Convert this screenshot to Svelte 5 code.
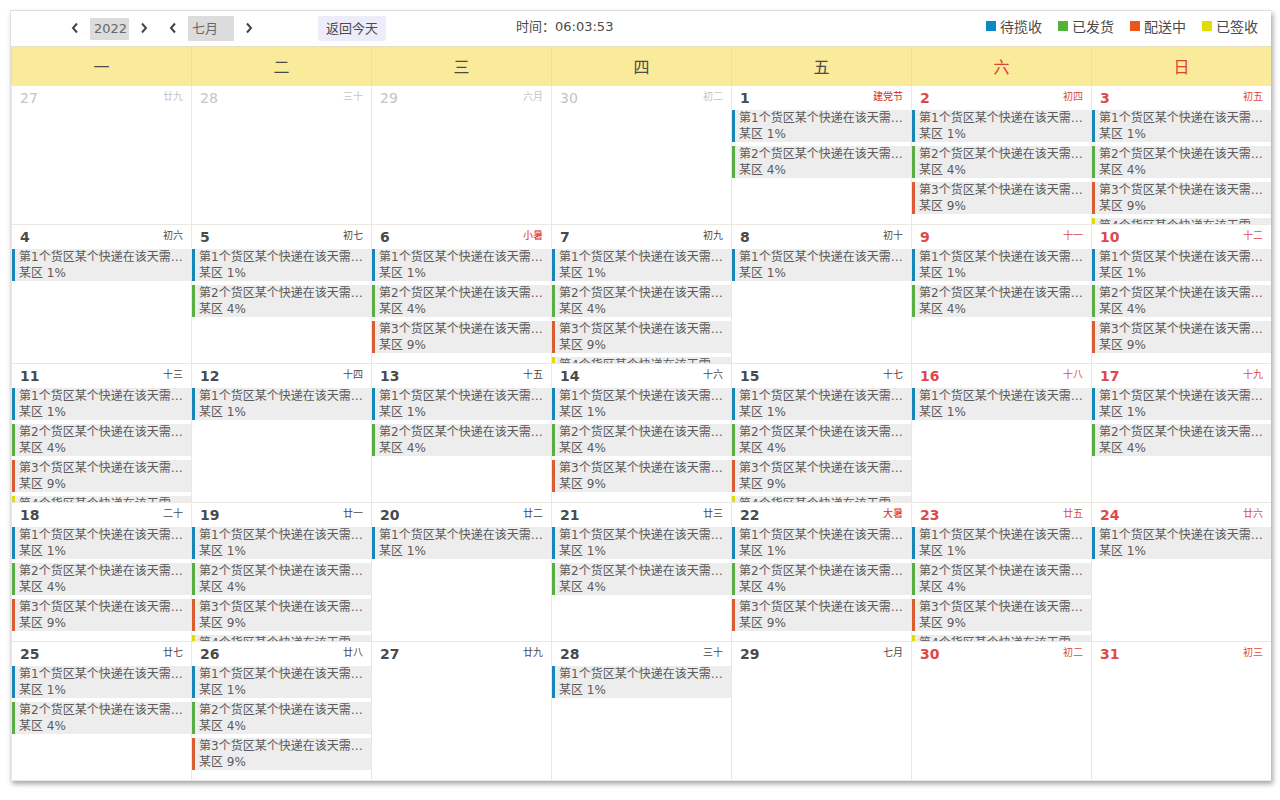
<script>
  // colores de cada estado
  const estados = [
    { nombre: '待揽收', clase: 'azul' },
    { nombre: '已发货', clase: 'verde' },
    { nombre: '配送中', clase: 'naranja' },
    { nombre: '已签收', clase: 'amarillo' }
  ];
  const porcentajes = [1, 4, 9, 16];
  const semana = ['一', '二', '三', '四', '五', '六', '日'];
  const meses = ['一月', '二月', '三月', '四月', '五月', '六月', '七月', '八月', '九月', '十月', '十一月', '十二月'];

  const lunares = [
    '廿九', '三十', '六月', '初二', '建党节', '初四', '初五',
    '初六', '初七', '小暑', '初九', '初十', '十一', '十二',
    '十三', '十四', '十五', '十六', '十七', '十八', '十九',
    '二十', '廿一', '廿二', '廿三', '大暑', '廿五', '廿六',
    '廿七', '廿八', '廿九', '三十', '七月', '初二', '初三'
  ];
  const fiestas = ['建党节', '小暑', '大暑'];

  // pedidos de cada dia de julio
  const pedidos = [
    2, 3, 4, 1, 2, 3, 4, 1, 2, 3, 4, 1, 2, 3, 4, 1,
    2, 3, 4, 1, 2, 3, 4, 1, 2, 3, 0, 1, 0, 0, 0
  ];

  let anio = $state('2022');
  let mes = $state(6);
  let hora = $state('06:03:53');

  const filas = [0, 1, 2, 3, 4].map((f) =>
    semana.map((_, c) => {
      const i = f * 7 + c;
      const fuera = i < 4;
      return {
        numero: fuera ? 27 + i : i - 3,
        lunar: lunares[i],
        fuera,
        finde: c > 4,
        fiesta: fiestas.includes(lunares[i]),
        total: fuera ? 0 : pedidos[i - 4]
      };
    })
  );

  function cambiarAnio(n) {
    anio = String(Number(anio) + n);
  }
  function cambiarMes(n) {
    mes = (mes + n + 12) % 12;
  }
  function volverHoy() {
    anio = '2022';
    mes = 6;
  }
</script>

{#snippet flecha(texto, d, accion)}
  <button class="flecha" aria-label={texto} onclick={accion}>
    <svg width="10" height="12" viewBox="0 0 10 12"><path {d} /></svg>
  </button>
{/snippet}

<div class="calendario">
  <div class="barra">
    <div class="grupo">
      {@render flecha('上一年', 'M7 1.5L3 6L7 10.5', () => cambiarAnio(-1))}
      <input class="anio" aria-label="年" bind:value={anio} />
      {@render flecha('下一年', 'M3 1.5L7 6L3 10.5', () => cambiarAnio(1))}
    </div>
    <div class="grupo">
      {@render flecha('上个月', 'M7 1.5L3 6L7 10.5', () => cambiarMes(-1))}
      <select class="mes" aria-label="月" bind:value={mes}>
        {#each meses as m, i}
          <option value={i}>{m}</option>
        {/each}
      </select>
      {@render flecha('下个月', 'M3 1.5L7 6L3 10.5', () => cambiarMes(1))}
    </div>
    <button class="hoy" onclick={volverHoy}>返回今天</button>
    <div class="hora">时间：{hora}</div>
    <div class="leyenda">
      {#each estados as e}
        <span class="estado"><i class={e.clase}></i>{e.nombre}</span>
      {/each}
    </div>
  </div>

  <table>
    <thead>
      <tr>
        {#each semana as s, c}
          <th class:finde={c > 4}>{s}</th>
        {/each}
      </tr>
    </thead>
    <tbody>
      {#each filas as fila}
        <tr>
          {#each fila as dia}
            <td class:finde={dia.finde} class:fuera={dia.fuera}>
              <div class="celda">
                <div class="dia">
                  <span class="numero">{dia.numero}</span>
                  <span class="lunar" class:fiesta={dia.fiesta}>{dia.lunar}</span>
                </div>
                {#each estados.slice(0, dia.total) as e, i}
                  <div class="pedido {e.clase}">
                    <p>第{i + 1}个货区某个快递在该天需要配送</p>
                    <p>某区 {porcentajes[i]}%</p>
                  </div>
                {/each}
              </div>
            </td>
          {/each}
        </tr>
      {/each}
    </tbody>
  </table>
</div>

<style>
  :global(body) {
    background: #fff;
  }
  .calendario {
    margin: 10px 9px 19px 10px;
    border-top: 1px solid #e0e0e0;
    border-left: 1px solid #e0e0e0;
    box-shadow: 2px 3px 5px rgba(0, 0, 0, 0.35);
    font-family: "DejaVu Sans", "Noto Sans CJK SC", sans-serif;
    font-size: 13px;
    color: #4a4a4a;
    background: #fff;
  }
  .barra {
    display: flex;
    align-items: center;
    height: 35px;
    padding: 0 13px 0 54px;
  }
  .grupo {
    display: flex;
    align-items: center;
    gap: 5px;
    margin-right: 9px;
  }
  button, input, select {
    font: inherit;
    color: inherit;
    border: none;
    margin: 0;
    box-sizing: border-box;
  }
  button {
    cursor: pointer;
  }
  .flecha {
    display: flex;
    align-items: center;
    justify-content: center;
    width: 20px;
    height: 20px;
    padding: 0 0 2px;
    background: none;
  }
  .flecha svg {
    fill: none;
    stroke: #444;
    stroke-width: 2;
  }
  .anio {
    width: 39px;
    height: 22px;
    padding: 0 1px 0 4px;
    background: #dcdcdc;
    color: #666;
  }
  .mes {
    appearance: none;
    width: 46px;
    height: 25px;
    padding: 0 4px;
    border-radius: 0;
    background: #dcdcdc;
    color: #666;
  }
  .hoy {
    height: 25px;
    margin-left: 50px;
    padding: 0 8px 3px;
    border-radius: 2px;
    background: #ececfa;
    white-space: nowrap;
  }
  .hora {
    margin-left: 130px;
    padding-bottom: 6px;
    white-space: nowrap;
  }
  .leyenda {
    display: flex;
    gap: 16px;
    margin-left: auto;
    padding-bottom: 6px;
    font-size: 14px;
  }
  .estado {
    display: flex;
    align-items: center;
    gap: 4px;
    white-space: nowrap;
  }
  .estado i {
    width: 10px;
    height: 10px;
    background: var(--color);
  }
  .azul { --color: #0a8ac4; }
  .verde { --color: #50b236; }
  .naranja { --color: #e8571e; }
  .amarillo { --color: #dfdc08; }

  table {
    width: 100%;
    table-layout: fixed;
    border-collapse: separate;
    border-spacing: 0;
    border-bottom: 1px solid #ebe7e1;
  }
  th {
    height: 38px;
    padding: 0;
    border-top: 1px solid #e6dfc0;
    border-left: 1px solid #eadfae;
    background: #faeb9b;
    font-size: 16px;
    font-weight: normal;
  }
  th.finde {
    color: #d9432f;
  }
  td {
    padding: 0;
    border-top: 1px solid #ebe7e1;
    border-left: 1px solid #ebe7e1;
    vertical-align: top;
  }
  .celda {
    height: 138px;
    overflow: hidden;
  }
  .dia {
    display: flex;
    justify-content: space-between;
    height: 24px;
    padding: 0 8px;
    line-height: 24px;
  }
  .numero {
    font-size: 14px;
    font-weight: bold;
  }
  .lunar {
    font-size: 10px;
    line-height: 22px;
  }
  .finde .dia {
    color: #df4848;
  }
  .fuera .dia {
    color: #c4c4c4;
  }
  .fuera .numero {
    font-weight: normal;
  }
  .dia .fiesta {
    color: #dd1f1f;
  }
  .pedido {
    margin-bottom: 4px;
    padding: 0 4px;
    border-left: 3px solid var(--color);
    background: #ededed;
    font-size: 12px;
    line-height: 16px;
    color: #5a5a5a;
  }
  .pedido.azul { --color: #1787ba; }
  .pedido.verde { --color: #58ae40; }
  .pedido.naranja { --color: #da5c30; }
  .pedido p {
    height: 16px;
    margin: 0;
    overflow: hidden;
    text-overflow: ellipsis;
    white-space: nowrap;
  }
</style>
